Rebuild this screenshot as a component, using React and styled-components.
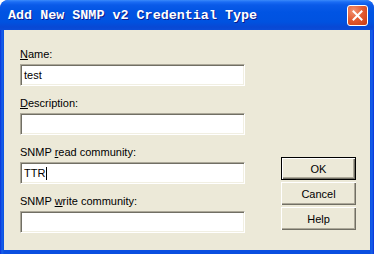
import styled, { createGlobalStyle } from "styled-components";

const Global = createGlobalStyle`
  html, body {
    margin: 0;
    padding: 0;
    background: #ffffff;
  }
`;

const Window = styled.div`
  width: 374px;
  height: 254px;
  box-sizing: border-box;
  display: flex;
  flex-direction: column;
  background: linear-gradient(90deg, #0831d9 0px, #1660ea 2px, #0a4fe0 4px, #0a4fe0 calc(100% - 4px), #1660ea calc(100% - 2px), #0831d9 100%);
  border-radius: 8px 8px 0 0;
  padding: 0 4px 4px;
  overflow: hidden;
`;

const TitleBar = styled.div`
  height: 30px;
  margin: 0 -4px;
  padding: 0 6px 0 8px;
  display: flex;
  align-items: center;
  justify-content: space-between;
  border-radius: 8px 8px 0 0;
  background: linear-gradient(180deg, #3b8afa 0px, #1a6cf4 2px, #0a5ae8 5px, #0054e3 12px, #0052e0 22px, #0848d4 27px, #0a4cd8 30px);
`;

const Title = styled.span`
  font-family: "Liberation Mono", "DejaVu Sans Mono", monospace;
  font-weight: bold;
  font-size: 13.4px;
  color: #ffffff;
  text-shadow: 1px 1px 0 #0a1a8c;
`;

const CloseButton = styled.div`
  width: 21px;
  height: 21px;
  box-sizing: border-box;
  border: 1px solid #ffffff;
  border-radius: 3px;
  background: radial-gradient(circle at 30% 25%, #f29272 0%, #e35d34 45%, #c93a10 100%);
  display: flex;
  align-items: center;
  justify-content: center;
`;

const Body = styled.div`
  flex: 1;
  background: #ece9d8;
  display: flex;
  padding: 17px 0 0 16px;
  font-family: "Liberation Sans", Arial, sans-serif;
  font-size: 11px;
  color: #000000;
`;

const Fields = styled.div`
  width: 225px;
  display: flex;
  flex-direction: column;
  gap: 10px;
`;

const Field = styled.div`
  display: flex;
  flex-direction: column;
`;

const Label = styled.div`
  height: 14px;
  line-height: 14px;
  margin-bottom: 3px;
`;

const Key = styled.span`
  text-decoration: underline;
  text-underline-offset: 1px;
`;

const TextBox = styled.div`
  height: 22px;
  box-sizing: border-box;
  background: #ffffff;
  border-top: 1px solid #aca899;
  border-left: 1px solid #aca899;
  border-right: 1px solid #ffffff;
  border-bottom: 1px solid #ffffff;
  box-shadow: inset 1px 1px 0 #716f64, inset -1px -1px 0 #f1efe2;
  padding: 0 3px;
  display: flex;
  align-items: center;
  line-height: 14px;
`;

const Caret = styled.span`
  display: inline-block;
  width: 1px;
  height: 13px;
  background: #000000;
  margin-left: 1px;
`;

const Buttons = styled.div`
  margin-left: 36px;
  padding-top: 110px;
  display: flex;
  flex-direction: column;
  gap: 2px;
`;

const Button = styled.div`
  width: 75px;
  height: 23px;
  box-sizing: border-box;
  background: #ece9d8;
  border: ${(p) => (p.$default ? "1px solid #000000" : "none")};
  box-shadow: inset 1px 1px 0 #ffffff, inset -1px -1px 0 #716f64, inset -2px -2px 0 #aca899;
  display: flex;
  align-items: center;
  justify-content: center;
`;

const fields = [
  { key: "N", rest: "ame:", value: "test" },
  { key: "D", rest: "escription:", value: "" },
  { pre: "SNMP ", key: "r", rest: "ead community:", value: "TTR", caret: true },
  { pre: "SNMP ", key: "w", rest: "rite community:", value: "" },
];

export default function App() {
  return (
    <>
      <Global />
      <Window>
        <TitleBar>
          <Title>Add New SNMP v2 Credential Type</Title>
          <CloseButton>
            <svg width="11" height="11" viewBox="0 0 11 11">
              <path d="M1.5 1.5 L9.5 9.5 M9.5 1.5 L1.5 9.5" stroke="#ffffff" strokeWidth="2" strokeLinecap="square" />
            </svg>
          </CloseButton>
        </TitleBar>
        <Body>
          <Fields>
            {fields.map((f) => (
              <Field key={f.rest}>
                <Label>
                  {f.pre}
                  <Key>{f.key}</Key>
                  {f.rest}
                </Label>
                <TextBox>
                  {f.value}
                  {f.caret && <Caret />}
                </TextBox>
              </Field>
            ))}
          </Fields>
          <Buttons>
            <Button $default>OK</Button>
            <Button>Cancel</Button>
            <Button>Help</Button>
          </Buttons>
        </Body>
      </Window>
    </>
  );
}
